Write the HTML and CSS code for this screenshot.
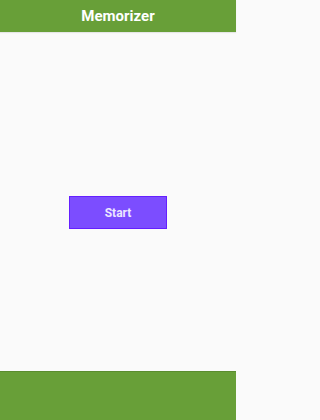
FILE: index.html
```html
<!DOCTYPE html>
<html>
<head>
<meta charset="utf-8">
<link rel="stylesheet" href="styles.css">
</head>
<body>
<div class="app">
  <header class="topbar">Memorizer</header>
  <main class="content">
    <button class="start">Start</button>
  </main>
  <footer class="bottombar"></footer>
</div>
</body>
</html>
```
FILE: styles.css
```css
html, body {
  margin: 0;
  padding: 0;
  height: 100%;
}
body {
  font-family: Roboto, "Liberation Sans", sans-serif;
  background: #fafafa;
}
.app {
  display: flex;
  flex-direction: column;
  width: 236px;
  height: 420px;
}
.topbar {
  height: 32px;
  background: #689f38;
  color: #ffffff;
  font-weight: 700;
  font-size: 15px;
  display: flex;
  align-items: center;
  justify-content: center;
  box-shadow: 0 1px 1px rgba(0,0,0,0.08);
}
.content {
  flex: 1;
  display: flex;
  align-items: center;
  justify-content: center;
}
.start {
  width: 98px;
  height: 33px;
  margin-top: 22px;
  background: #7c4dff;
  border: 1px solid #651fff;
  color: #ece6ff;
  font-family: Roboto, "Liberation Sans", sans-serif;
  font-weight: 700;
  font-size: 12px;
  padding: 0;
}
.bottombar {
  height: 48px;
  background: #689f38;
  border-top: 1px solid #5b8c2f;
}
```
